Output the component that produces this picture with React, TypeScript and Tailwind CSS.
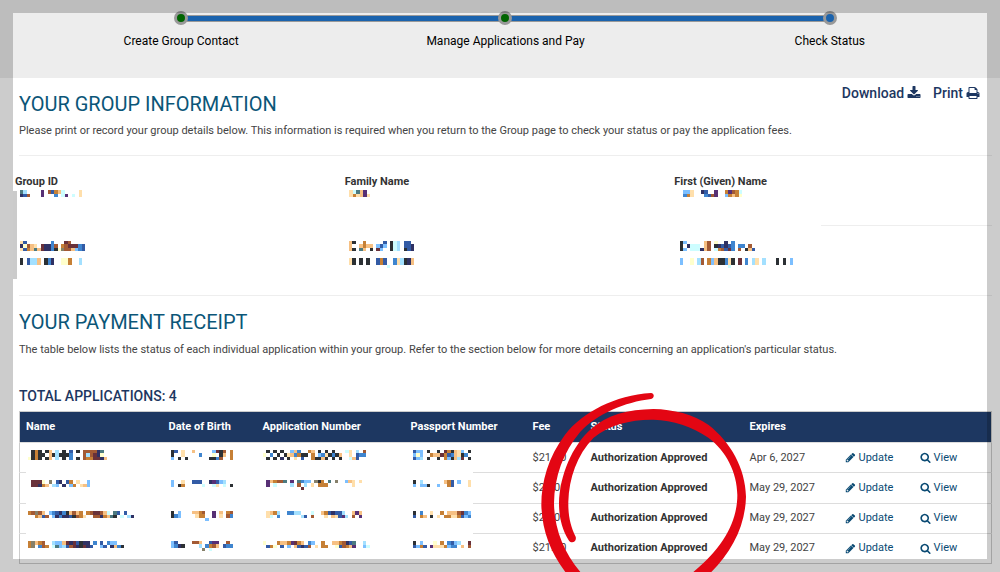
import type { ReactNode } from "react";

const PALETTE: Record<string, string> = {
    k: "#2c3034",
    n: "#2f3163",
    b: "#335ba5",
    B: "#3f85cf",
    s: "#7cbfff",
    c: "#a3e0ff",
    l: "#cdfdff",
    o: "#c68036",
    t: "#f6c083",
    y: "#ffdfab",
    w: "#ffffcc",
    r: "#a35a34",
    m: "#69313a",
    p: "#573075",
    g: "#86806a",
    T: "#4c7a80",
};

const steps = [
    { label: "Create Group Contact", done: true },
    { label: "Manage Applications and Pay", done: true },
    { label: "Check Status", done: false },
];

const details = [
    {
        label: "Group ID",
        indent: "ml-[5px]",
        first: ["Tc....p.rbotl....y", "nbr...p...B.lp.l.y"],
        second: ["yb.......B...mr....", "nwrty.mnnBr.ormmmBb", "ybotTtmnnBkwgrrtsBb"],
        third: ["k.bcct.kBn..wwo..c", "k.bcct.kBn..wwo..c"],
    },
    {
        label: "Family Name",
        indent: "ml-1",
        first: ["ylTtp.", "yoytpy"],
        second: ["tk..o.....b.klc.bb.", "t..tott.sbs.klc.bbn", "tk.Tt.k.ms..klc.kbn"],
        third: ["yk.k.k..bob..Bycknt", "yk.k.k..bob..Bycknt", "...........l......."],
    },
    {
        label: "First (Given) Name",
        indent: "ml-[6px]",
        first: [".ssy..nb..p..oprol", ".Boy...Bbrp..sotow"],
        second: ["ks.....tr.w..n.B......", "k.nlll.tr.knbnbB.BB.r.", "ks.lllntr.lorbmB.r.ktb"],
        third: [
            "s..w.cr.ostkkByk.m.B.cy.c...k.k.s",
            "s..w.cr.ostkkByk.m.B.cy.c...k.k.s",
            "..............l..................",
        ],
    },
];

const applications = [
    {
        name: [".kok.kt.c.k.b.k.rrrrnT", ".kokk.tkckkkB...rcrmnw", "wkok.kt.c.k.B.k.roommnt"],
        birth: ["kb.y..t.....smkr.o", "k..y....B...w.kt.o", "s.k.k......kkBr..o"],
        number: [".k.k.k..stB..ot.k.k.k...ly.c.r", "w.B.k.kytBokk.o.sBykBkt..y.bBB", ".k.k.n.k.y.b..okktk.k.k..ltb.."],
        passport: ["bss.k..k.moktys.k", "sws..ottmobBtykB.", "bsc.k..k.osktcm.k"],
        expires: "Apr 6, 2027",
    },
    {
        name: [".mmmw.g.bn.bo.y..s", ".mmnot.cs.n.so.yts"],
        birth: ["s..y..bbb..npbsc..", "s.ko.....l..ly.l.k"],
        number: [".ptorrT.p.TBss.gko.T.g..sty.y", ".p.l....c.r.c.y.ooo.......y.", "...........m................."],
        passport: ["k.c......tob.s..y", "s.ssk..s..ob....y"],
        expires: "May 29, 2027",
    },
    {
        name: ["orgrt.sBbnBktrto.ormmrtl.Tb.b", "..otbr.snBnnbkroy..rrnotTk.l.cn"],
        birth: ["k.s...ttor..p.t.or", "kBs....yoo..p.y.rB", "..........s......."],
        number: [".ytoc..BBcc...l..tobnbbc..tpt", ".yl.B......cb.r...y.tybpc.r.p"],
        passport: ["k.B..y..o.tttrmBs", "b.ot.k.y.ooyyobsB"],
        expires: "May 29, 2027",
    },
    {
        name: ["ogtor..csstmnmbknn.B.b.Bss.", "og.Bro.lTscbrmnkmnb..sb.ntBk"],
        birth: ["sb....rrt..bpp..r.", "sBnk....c.Bort.bBB", ".........g.l......"],
        number: ["w...ottopmot.Bs..o..ttornbT..c.", ".bow.b.s.tbnbr.y.oo..wbrotp..sl."],
        passport: ["k.s...w.o.Bbsc..m", "bsob.pyyyosBB.t.r"],
        expires: "May 29, 2027",
    },
];

function Mosaic({ rows, className = "" }: { rows: string[]; className?: string }) {
    const cols = Math.max(...rows.map(row => row.length));

    return (
        <svg
            aria-hidden="true"
            className={`block ${className}`}
            width={Math.round((cols * 24) / 7)}
            height={Math.round((rows.length * 24) / 7)}
            viewBox={`0 0 ${cols} ${rows.length}`}
            preserveAspectRatio="none"
            shapeRendering="crispEdges"
        >
            {rows.map((row, y) =>
                row.split("").map((key, x) =>
                    PALETTE[key] ? <rect key={`${x}-${y}`} x={x} y={y} width="1" height="1" fill={PALETTE[key]} /> : null
                )
            )}
        </svg>
    );
}

function Icon({ path, className }: { path: string; className: string }) {
    return (
        <svg aria-hidden="true" viewBox="0 0 1792 1792" fill="currentColor" className={className}>
            <path d={path} />
        </svg>
    );
}

const DOWNLOAD =
    "M1344 1344q0-26-19-45t-45-19-45 19-19 45 19 45 45 19 45-19 19-45zm256 0q0-26-19-45t-45-19-45 19-19 45 19 45 45 19 45-19 19-45zm128-224v320q0 40-28 68t-68 28h-1472q-40 0-68-28t-28-68v-320q0-40 28-68t68-28h465l135 136q58 56 136 56t136-56l136-136h464q40 0 68 28t28 68zm-325-569q17 41-14 70l-448 448q-18 19-45 19t-45-19l-448-448q-31-29-14-70 17-39 59-39h256v-448q0-26 19-45t45-19h256q26 0 45 19t19 45v448h256q42 0 59 39z";
const PRINT =
    "M448 1536h896v-256h-896v256zm0-640h896v-384h-160q-40 0-68-28t-28-68v-160h-640v640zm1152 64q0-26-19-45t-45-19-45 19-19 45 19 45 45 19 45-19 19-45zm128 0v416q0 13-9.5 22.5t-22.5 9.5h-224v160q0 40-28 68t-68 28h-960q-40 0-68-28t-28-68v-160h-224q-13 0-22.5-9.5t-9.5-22.5v-416q0-79 56.5-135.5t135.5-56.5h64v-544q0-40 28-68t68-28h672q40 0 88 20t76 48l152 152q28 28 48 76t20 88v256h64q79 0 135.5 56.5t56.5 135.5z";
const PENCIL =
    "M491 1536l91-91-235-235-91 91v107h128v128h107zm523-928q0-22-22-22-10 0-17 7l-542 542q-7 7-7 17 0 22 22 22 10 0 17-7l542-542q7-7 7-17zm-54-192l416 416-832 832h-416v-416zm683 96q0 53-37 90l-166 166-416-416 166-165q36-38 90-38 53 0 91 38l235 234q37 39 37 91z";
const SEARCH =
    "M1216 832q0-185-131.5-316.5t-316.5-131.5-316.5 131.5-131.5 316.5 131.5 316.5 316.5 131.5 316.5-131.5 131.5-316.5zm512 832q0 52-38 90t-90 38q-54 0-90-38l-343-342q-179 124-399 124-143 0-273.5-55.5t-225-150-150-225-55.5-273.5 55.5-273.5 150-225 225-150 273.5-55.5 273.5 55.5 225 150 150 225 55.5 273.5q0 220-124 399l343 343q37 37 37 90z";

function Stepper() {
    return (
        <nav className="h-[78px] bg-[#ededed] pl-[19px] pr-2 pt-[11px]">
            <ol className="relative grid grid-cols-3">
                <li aria-hidden="true" className="absolute left-1/6 right-1/6 top-1 h-[7px] border-y border-[#999] bg-[#1b63ad]" />
                {steps.map(step => (
                    <li key={step.label} className="relative flex flex-col items-center">
                        <span className={`h-[14px] w-[14px] rounded-full border-[3px] border-[#999] ${step.done ? "bg-[#006400]" : "bg-[#1b63ad]"}`} />
                        <span className="mt-2 text-xs text-black">{step.label}</span>
                    </li>
                ))}
            </ol>
        </nav>
    );
}

function Redacted({ rows, className = "pl-2" }: { rows: string[]; className?: string }) {
    return (
        <td className={`pt-[7px] align-top ${className}`}>
            <Mosaic rows={rows} className="relative z-10" />
        </td>
    );
}

function RowLink({ path, children }: { path: string; children: ReactNode }) {
    return (
        <a href="#" className="flex items-center gap-[3px] text-[#0a4a73]">
            <Icon path={path} className="h-[11px] w-[11px]" />
            {children}
        </a>
    );
}

function PenCircle() {
    return (
        <svg aria-hidden="true" viewBox="0 0 780 576" className="pointer-events-none absolute left-[491px] -top-[31px] z-30 h-48 w-[260px]">
            <g fill="#e30613">
                <path d="M423 39C315 46 220 95 165 164C115 230 94 306 94 375C96 450 120 515 166 576H211C160 515 133 445 132 370C133 290 160 215 211 155C262 102 345 66 423 57C434 54 434 40 423 39Z" />
                <path d="M604 576C665 515 706 438 708 350C706 264 662 187 596 135C550 103 490 88 430 87C355 88 290 105 243 147C187 197 149 285 147 370C147 410 156 450 177 482C186 492 201 484 197 470C182 440 174 408 175 365C177 295 201 225 250 174C298 134 363 118 430 119C490 121 545 139 595 173C648 213 681 275 682 345C682 420 644 500 550 576Z" />
            </g>
        </svg>
    );
}

export default function App() {
    return (
        <div className="relative overflow-hidden bg-white pb-2 font-['Roboto',sans-serif] text-[11px] leading-4 text-[#444]">
            <Stepper />

            <main className="pl-[19px] pr-2">
                <div className="flex items-start justify-between">
                    <h1 className="pt-[14px] text-xl leading-6 text-[#0b5678]">YOUR GROUP INFORMATION</h1>
                    <div className="flex gap-3 pr-3 pt-[5px] text-sm leading-5 font-medium text-[#1d3761]">
                        <button type="button" className="flex items-center gap-[3px]">
                            Download <Icon path={DOWNLOAD} className="h-[14px] w-[14px]" />
                        </button>
                        <button type="button" className="flex items-center gap-[3px]">
                            Print <Icon path={PRINT} className="h-[14px] w-[14px]" />
                        </button>
                    </div>
                </div>
                <p className="mt-[7px]">
                    Please print or record your group details below. This information is required when you return to the Group page to check your status or pay the application fees.
                </p>
                <hr className="mt-4 border-[#eee]" />

                <section className="relative">
                    <div className="-ml-1 -mr-3 grid grid-cols-3 pt-[18px]">
                        {details.map(detail => (
                            <div key={detail.label}>
                                <h2 className="font-bold text-[#333]">{detail.label}</h2>
                                <Mosaic rows={detail.first} className={detail.indent} />
                            </div>
                        ))}
                    </div>
                    <hr className="ml-auto mt-7 w-[171px] border-[#eee]" />
                    <div className="-ml-1 -mr-3 grid h-[69px] grid-cols-3 pt-[15px]">
                        {details.map(detail => (
                            <div key={detail.label} className="space-y-[7px]">
                                <Mosaic rows={detail.second} className={detail.indent} />
                                <Mosaic rows={detail.third} className={detail.indent} />
                            </div>
                        ))}
                    </div>
                    <div className="absolute -left-[6px] bottom-4 top-[35px] w-1 bg-[#cbcbcb]" />
                </section>

                <hr className="border-[#eee]" />
                <h1 className="pt-[14px] text-xl leading-6 text-[#0b5678]">YOUR PAYMENT RECEIPT</h1>
                <p className="mt-2">
                    The table below lists the status of each individual application within your group. Refer to the section below for more details concerning an application's particular status.
                </p>
                <h2 className="mt-7 text-sm leading-5 font-medium text-[#1d3761]">TOTAL APPLICATIONS: 4</h2>

                <div className="relative mt-[5px]">
                    <table className="h-[153px] w-full table-fixed border-collapse border border-[#ccc] text-left">
                        <thead>
                            <tr className="h-[31px] bg-[#1d3761] text-white">
                                <th className="w-[143px] pl-[6px]">Name</th>
                                <th className="w-[94px] pl-[6px]">Date of Birth</th>
                                <th className="w-[148px] pl-[6px]">Application Number</th>
                                <th className="w-[122px] pl-[6px]">Passport Number</th>
                                <th className="w-[58px] pl-[6px]">Fee</th>
                                <th className="w-[159px] pl-[6px]">Status</th>
                                <th className="w-[95px] pl-[6px]">Expires</th>
                                <th className="w-[75px]" />
                                <th />
                            </tr>
                        </thead>
                        <tbody>
                            {applications.map((application, i) => (
                                <tr key={i} className="h-[30px] border-t border-[#ddd]">
                                    <Redacted rows={application.name} />
                                    <Redacted rows={application.birth} />
                                    <Redacted rows={application.number} className="pl-[6px]" />
                                    <Redacted rows={application.passport} />
                                    <td className="pl-[6px]">$21.00</td>
                                    <td className="pl-[6px] font-bold text-[#333]">Authorization Approved</td>
                                    <td className="pl-[6px]">{application.expires}</td>
                                    <td className="pl-[6px]">
                                        <RowLink path={PENCIL}>Update</RowLink>
                                    </td>
                                    <td className="pl-[6px]">
                                        <RowLink path={SEARCH}>View</RowLink>
                                    </td>
                                </tr>
                            ))}
                        </tbody>
                    </table>
                    <div className="absolute bottom-1 left-[7px] top-8 w-[447px] bg-white" />
                    <PenCircle />
                </div>
            </main>

            <div className="pointer-events-none absolute inset-0 z-20 border-[13px] border-black/20" />
        </div>
    );
}
